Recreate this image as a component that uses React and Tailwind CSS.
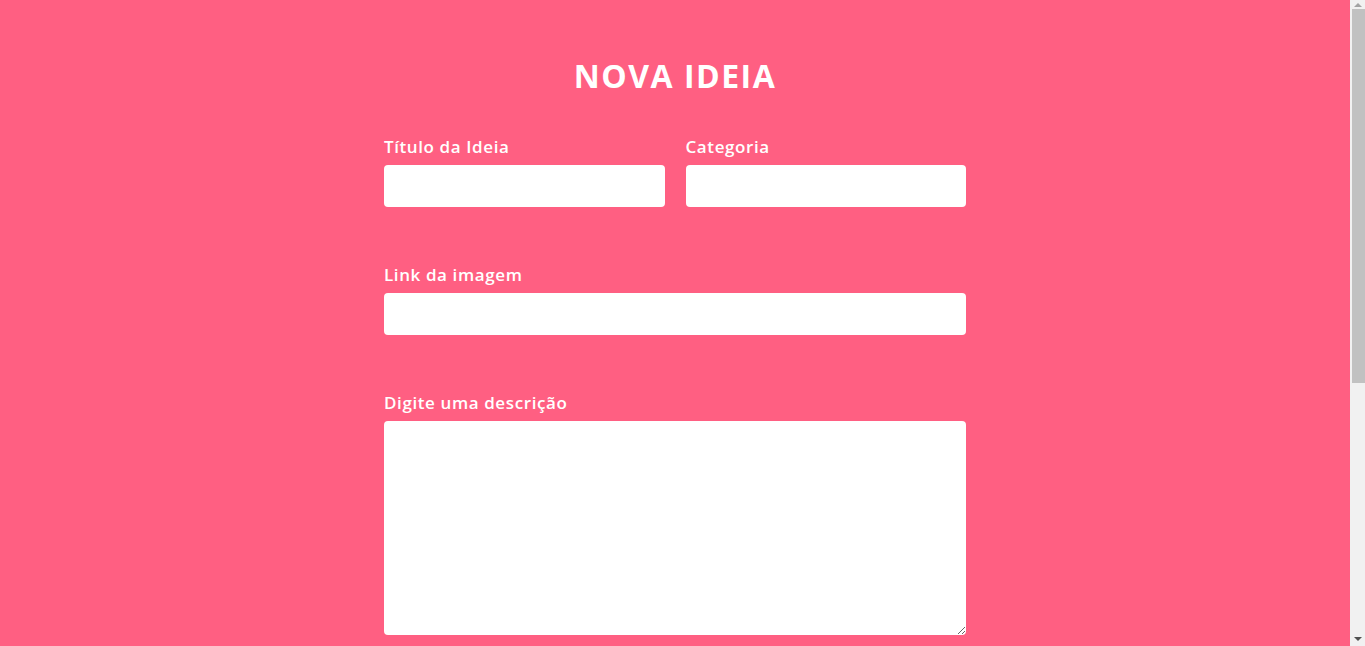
export default function App() {
  const label = "mb-[7px] h-[22px] text-[17px] font-semibold leading-[22px] tracking-[0.6px]";
  const input = "h-[42px] w-full rounded-[4px] bg-white px-3 text-black outline-none";
  return (
    <div className="flex h-[646px] w-full overflow-hidden bg-[#ff5f82] font-['Open_Sans',sans-serif] text-white">
      <div className="min-w-0 flex-1">
        <div className="mx-auto w-[582px] pt-[54px]">
          <h1 className="text-center text-[32px] font-bold leading-[44px] tracking-[1.5px]">NOVA IDEIA</h1>
          <form className="mt-[38px] flex flex-col">
            <div className="flex gap-[21px]">
              <div className="flex flex-1 flex-col">
                <label className={label}>Título da Ideia</label>
                <input className={input} />
              </div>
              <div className="flex flex-1 flex-col">
                <label className={label}>Categoria</label>
                <input className={input} />
              </div>
            </div>
            <div className="mt-[57px] flex flex-col">
              <label className={label}>Link da imagem</label>
              <input className={input} />
            </div>
            <div className="mt-[57px] flex flex-col">
              <label className={label}>Digite uma descrição</label>
              <textarea className="h-[214px] w-full rounded-[4px] bg-white p-3 text-black outline-none" />
            </div>
          </form>
        </div>
      </div>
      <div className="flex w-[15px] shrink-0 flex-col items-center bg-[#f1f1f1]">
        <div className="flex h-[9px] items-center justify-center pt-[1px]">
          <div className="h-0 w-0 border-x-[4px] border-b-[4px] border-x-transparent border-b-[#a3a3a3]" />
        </div>
        <div className="ml-[1px] h-[374px] w-[13px] bg-[#c1c1c1]" />
        <div className="flex-1" />
        <div className="flex h-[12px] items-center justify-center pb-[2px]">
          <div className="h-0 w-0 border-x-[4px] border-t-[4px] border-x-transparent border-t-[#505050]" />
        </div>
      </div>
    </div>
  );
}
